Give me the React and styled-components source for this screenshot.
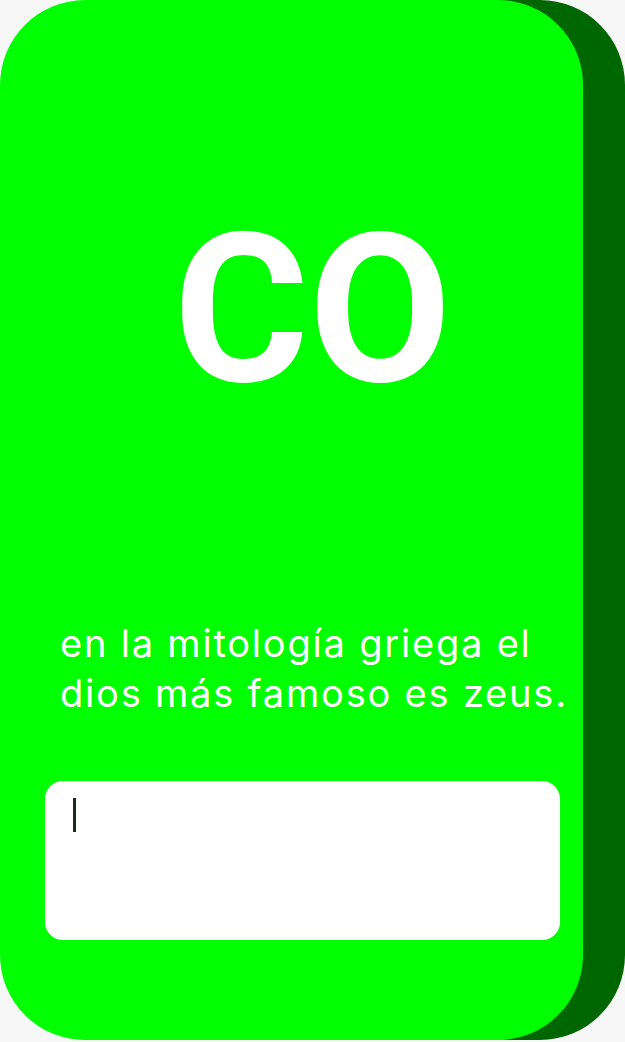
import React from "react"
import styled, { createGlobalStyle } from "styled-components"

const GlobalStyle = createGlobalStyle`
* {
    padding: 0;
    margin: 0;
    box-sizing: border-box;
}

body {
    background-color: #f7f7f7;
    font-family: Inter, "Noto Sans", sans-serif;
    overflow: hidden;
}
`

const Screen = styled.main`
width: 625px;
height: 1042px;
`

const Card = styled.section`
width: 583px;
height: 1040px;
background-color: #00ff00;
border-radius: 85px;
box-shadow: 42px 0 0 #006600;
display: flex;
flex-direction: column;
`

const Word = styled.h1`
margin-top: 201px;
padding-left: 42px;
text-align: center;
font-family: Roboto, "Liberation Sans", sans-serif;
font-weight: 700;
font-size: 207px;
line-height: 220px;
color: #ffffff;
`

const Hint = styled.p`
margin-top: 197px;
padding-left: 60px;
font-size: 38px;
line-height: 50px;
letter-spacing: 1.8px;
color: #ffffff;
`

const Answer = styled.div`
margin: 63px 0 0 45px;
width: 515px;
height: 159px;
background-color: #ffffff;
border-radius: 18px;
padding: 17px 0 0 28px;
`

const Caret = styled.span`
display: block;
width: 3px;
height: 34px;
background-color: #1b2b1b;
`

export default function App() {
    return (
        <Screen>
            <GlobalStyle />
            <Card>
                <Word>CO</Word>
                <Hint>
                    en la mitología griega el<br />
                    dios más famoso es zeus.
                </Hint>
                <Answer>
                    <Caret />
                </Answer>
            </Card>
        </Screen>
    )
}
